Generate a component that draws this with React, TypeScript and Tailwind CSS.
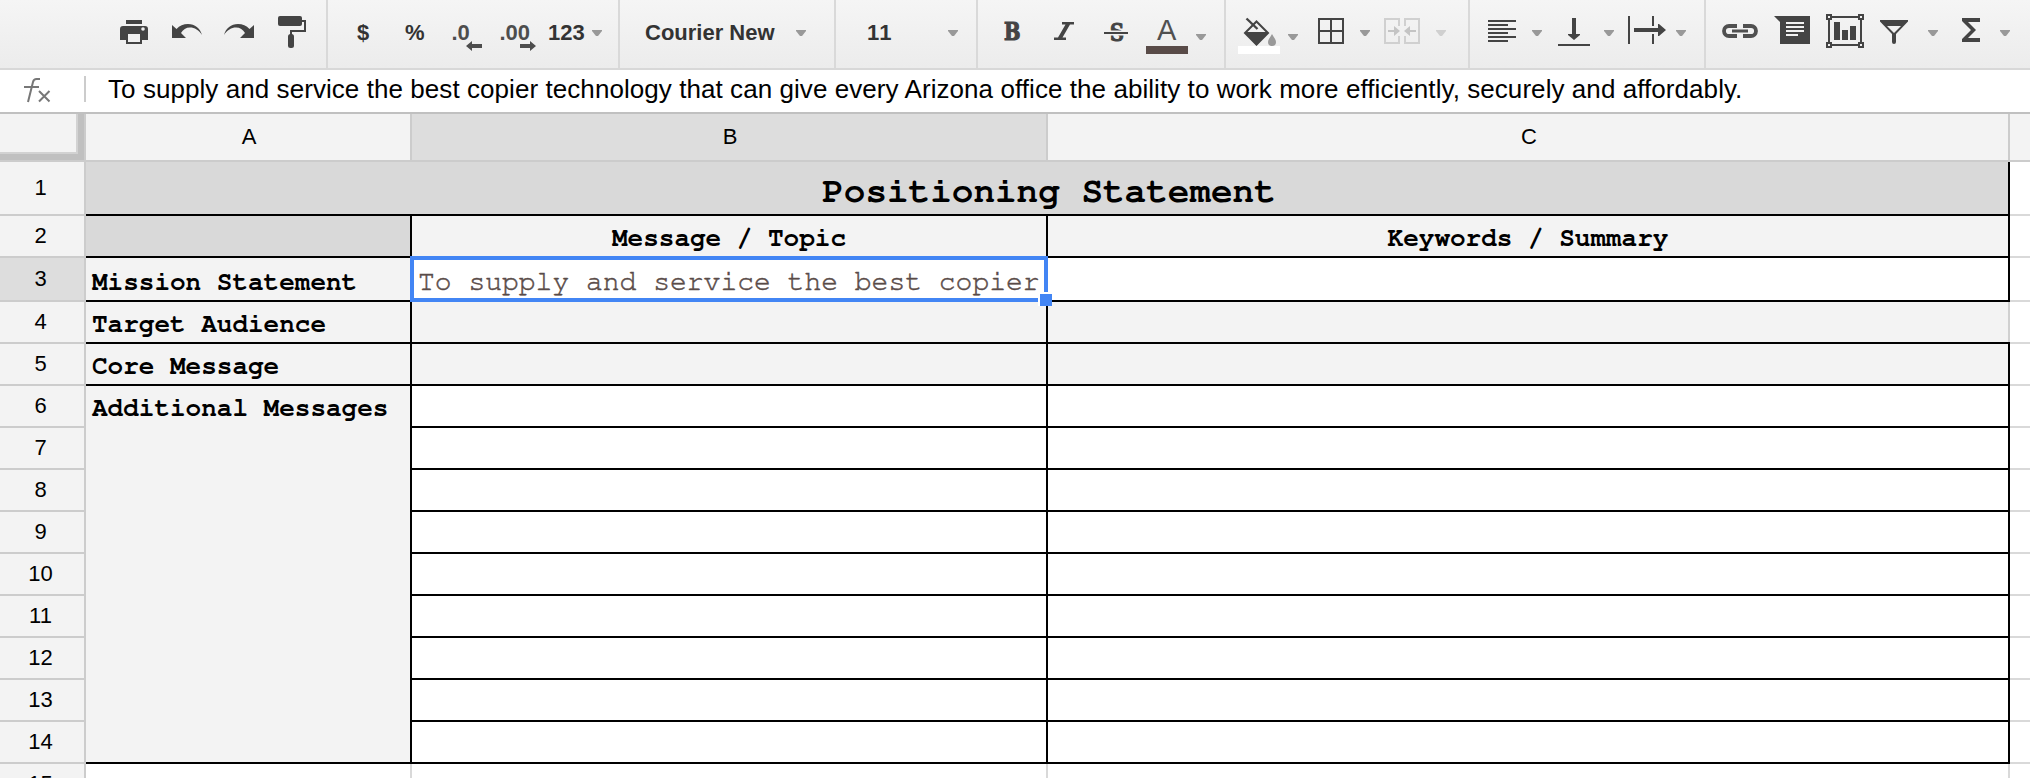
import type { ReactNode } from "react";

type IconProps = { box: string; className: string; children: ReactNode; color?: string };

/* Toolbar glyphs share one 68px tall coordinate space, so each viewBox is a slice of it. */
function Icon({ box, className, children, color = "#444444" }: IconProps) {
  return (
    <svg viewBox={box} className={`h-[68px] shrink-0 ${className}`} fill={color} stroke="none">
      {children}
    </svg>
  );
}

function Caret({ className, color = "#999999" }: { className: string; color?: string }) {
  return (
    <svg viewBox="0 0 10 6" className={`h-1.5 w-2.5 shrink-0 ${className}`} fill={color}>
      <path d="M0 0h10v1L6 6H4L0 1z" />
    </svg>
  );
}

function Group({ className, children }: { className: string; children: ReactNode }) {
  return <div className={`flex h-[68px] shrink-0 border-[#d9d9d9] ${className}`}>{children}</div>;
}

const label = "mt-[19px] shrink-0 whitespace-nowrap text-[22px] leading-7 font-bold text-[#333333]";

function Toolbar() {
  return (
    <div className="flex h-[70px] shrink-0 overflow-hidden border-b-2 border-[#d8d8d8] bg-linear-to-b from-[#f5f5f5] to-[#ececec]">
      <Group className="w-[328px] border-r-2">
        <Icon box="120 0 28 68" className="ml-[120px] w-7">
          <path d="M126 20h16v4h-16z" />
          <path d="M123 26h22a3 3 0 0 1 3 3v11h-6v4h-16v-4h-6V29a3 3 0 0 1 3-3z" />
          <path d="M128 34h12v8h-12z" fill="#f1f1f1" />
          <circle cx="143" cy="29" r="1.8" fill="#f1f1f1" />
        </Icon>
        <Icon box="172 0 30 68" className="ml-6 w-[30px]">
          <path d="M172 25l4.500 4c3-3.200 7-5 11.500-5 7 0 12 4 14 11-3-5-7.500-7.500-12-7.500-4 0-7 2-9 5.500l5 5H172z" />
        </Icon>
        <Icon box="224 0 30 68" className="ml-[22px] w-[30px]">
          <path d="M254 25l-4.500 4c-3-3.200-7-5-11.500-5-7 0-12 4-14 11 3-5 7.500-7.500 12-7.500 4 0 7 2 9 5.500l-5 5H254z" />
        </Icon>
        <Icon box="278 0 28 68" className="ml-6 w-7">
          <rect x="278" y="16" width="24" height="10" rx="2" />
          <path d="M302 21h3v10h-14v4" fill="none" stroke="#444444" strokeWidth="2" />
          <rect x="288" y="34" width="6" height="14" rx="2.500" />
        </Icon>
      </Group>

      <Group className="w-[292px] border-r-2">
        <span className={`ml-[29px] w-12 ${label}`}>$</span>
        <span className={`w-[46px] ${label}`}>%</span>
        <Icon box="451 0 33 68" className="w-[33px]" color="#4d4d4d">
          <text x="451.500" y="40" fontSize="22" fontWeight="700">.0</text>
          <path d="M466 46l6-5v3h10v4h-10v3z" />
        </Icon>
        <Icon box="499 0 39 68" className="ml-[15px] w-[39px]" color="#4d4d4d">
          <text x="499.500" y="40" fontSize="22" fontWeight="700">.00</text>
          <path d="M536 46l-6-5v3h-10v4h10v3z" />
        </Icon>
        <span className={`ml-[10px] w-11 ${label}`}>123</span>
        <Caret className="mt-[30px]" />
      </Group>

      <Group className="w-[216px] border-r-2">
        <span className={`ml-[25px] w-[151px] ${label}`}>Courier New</span>
        <Caret className="mt-[30px]" />
      </Group>

      <Group className="w-[142px] border-r-2">
        <span className={`ml-[31px] w-[81px] [font-kerning:none] ${label}`}>11</span>
        <Caret className="mt-[30px]" />
      </Group>

      <Group className="w-[248px] border-r-2">
        <Icon box="1002 0 22 68" className="ml-6 w-[22px]">
          <text x="1004" y="39.500" fontSize="24" fontWeight="700" className="font-['DejaVu_Serif',serif]" stroke="#444444" strokeWidth="1.200" textLength="16.500" lengthAdjust="spacingAndGlyphs">B</text>
        </Icon>
        <Icon box="1052 0 26 68" className="ml-7 w-[26px]">
          <path d="M1062 22h12v2.500h-4l-7.500 13h3.500v2.500h-12v-2.500h4l7.500-13h-3.500z" />
        </Icon>
        <Icon box="1104 0 24 68" className="ml-[26px] w-6">
          <text x="1110" y="41" fontSize="24.500" fontWeight="700" className="font-['DejaVu_Serif',serif]" stroke="#444444" strokeWidth="1.200" textLength="14" lengthAdjust="spacingAndGlyphs">S</text>
          <path d="M1104 30.500h24v1.500h-24zM1104 34h24v1.500h-24z" fill="#f1f1f1" />
          <path d="M1104 32h24v2h-24z" />
        </Icon>
        <Icon box="1146 0 42 68" className="ml-[18px] w-[42px]">
          <text x="1157" y="40" fontSize="29" fill="#505050">A</text>
          <path d="M1146 46h42v8h-42z" fill="#594b48" />
        </Icon>
        <Caret className="mt-[34px] ml-2" />
      </Group>

      <Group className="w-[244px] border-r-2">
        <Icon box="1238 0 42 68" className="ml-3 w-[42px]">
          <path d="M1238 46h42v8h-42z" fill="#ffffff" />
          <path d="M1256.500 21.500L1268 33l-11.500 11.500L1245 33z" fill="none" stroke="#444444" strokeWidth="2" />
          <path d="M1244.500 32h24l-12 13.500z" />
          <path d="M1246.500 18.500l11 10.500" fill="none" stroke="#444444" strokeWidth="2.400" />
          <path d="M1272 34c2 3.500 4 5.500 4 8a4 4 0 0 1-8 0c0-2.500 2-4.500 4-8z" fill="#999999" />
        </Icon>
        <Caret className="mt-[34px] ml-2" />
        <Icon box="1318 0 26 68" className="ml-5 w-[26px]">
          <path d="M1319 19h24v24h-24zM1331 19v24M1319 31h24" fill="none" stroke="#444444" strokeWidth="2" />
        </Icon>
        <Caret className="mt-[30px] ml-4" />
        <Icon box="1384 0 36 68" className="ml-3.5 w-9" color="#c4c4c4">
          <path d="M1399 26v-7h-14v24h14v-7M1405 26v-7h14v24h-14v-7" fill="none" stroke="#d0d0d0" strokeWidth="2" />
          <path d="M1388 30h6v-4l6 5-6 5v-4h-6zM1416 30h-6v-4l-6 5 6 5v-4h6z" />
        </Icon>
        <Caret className="mt-[30px] ml-4" color="#d0d0d0" />
      </Group>

      <Group className="w-[236px] border-r-2">
        <Icon box="1488 0 28 68" className="ml-[18px] w-7">
          <path d="M1488 20h28v2h-28zM1488 24h20v2h-20zM1488 28h28v2h-28zM1488 32h20v2h-20zM1488 36h28v2h-28zM1488 40h20v2h-20z" />
        </Icon>
        <Caret className="mt-[30px] ml-4" />
        <Icon box="1558 0 32 68" className="ml-4 w-8">
          <path d="M1558 44h32v2h-32zM1572 18h4v16h4v1l-6 5-6-5v-1h4z" />
        </Icon>
        <Caret className="mt-[30px] ml-3.5" />
        <Icon box="1628 0 38 68" className="ml-3.5 w-[38px]">
          <path d="M1628 16h2v28h-2zM1652 16h2v10h-2zM1652 34h2v10h-2zM1634 28h24v-4h1l7 6-7 6h-1v-4h-24z" />
        </Icon>
        <Caret className="mt-[30px] ml-2.5" />
      </Group>

      <Group className="w-[324px]">
        <Icon box="1722 0 36 68" className="ml-4 w-9">
          <path d="M1737 26h-8a5 5 0 0 0 0 10h8M1743 26h8a5 5 0 0 1 0 10h-8" fill="none" stroke="#505050" strokeWidth="3.800" />
          <path d="M1732 29.500h16v3h-16z" fill="#505050" />
        </Icon>
        <Icon box="1774 0 36 68" className="ml-4 w-9">
          <path d="M1774 16h36v28h-30V22z" />
          <path d="M1786 22h18v2h-18zM1786 26h18v2h-18zM1786 30h18v2h-18zM1786 34h12v2h-12z" fill="#f1f1f1" />
        </Icon>
        <Icon box="1826 0 38 68" className="ml-4 w-[38px]">
          <path d="M1829 17h32v28h-32z" fill="none" stroke="#444444" strokeWidth="2" />
          <path d="M1826 14h6v6h-6zM1858 14h6v6h-6zM1826 42h6v6h-6zM1858 42h6v6h-6z" />
          <path d="M1828 16h2v2h-2zM1860 16h2v2h-2zM1828 44h2v2h-2zM1860 44h2v2h-2z" fill="#f1f1f1" />
          <path d="M1834 22h6v18h-6zM1842 30h6v10h-6zM1850 26h6v14h-6z" />
        </Icon>
        <Icon box="1880 0 28 68" className="ml-4 w-7">
          <path fillRule="evenodd" d="M1880 20h28v1.500l-12 12.500v8a2 2 0 0 1-4 0v-8l-12-12.500zM1887 26l7 7 7-7z" />
        </Icon>
        <Caret className="mt-[30px] ml-5" />
        <Icon box="1962 0 18 68" className="ml-6 w-[18px]">
          <path d="M1962 18h18v4h-12l8 8-8 8h12v4h-18v-3l9-9-9-9z" />
        </Icon>
        <Caret className="mt-[30px] ml-5" />
      </Group>
    </div>
  );
}

function FormulaBar() {
  return (
    <div className="flex h-11 shrink-0 border-b-2 border-[#c0c0c0] bg-white">
      <svg viewBox="24 70 28 42" className="ml-6 h-[42px] w-7 shrink-0" fill="none" stroke="#777777" strokeWidth="2">
        <path d="M40 79h-3.500c-2 0-3 1-3.500 3l-5 20M24 87h15M39 91l10.500 10.500M49.500 91L39 101.500" />
      </svg>
      <div className="mt-1.5 ml-8 h-[26px] w-0.5 shrink-0 bg-[#cccccc]" />
      <div className="mt-1 ml-[22px] text-[26px] leading-[30px] tracking-[0.065px] whitespace-nowrap text-black">
        To supply and service the best copier technology that can give every Arizona office the ability to work more efficiently, securely and affordably.
      </div>
    </div>
  );
}

const cell = "flex items-end overflow-hidden border-r-2 border-b-2 border-black";
const mono = "font-[FreeMono,'Liberation_Mono',monospace] whitespace-pre";
const head = "flex items-center justify-center border-r-2 border-b-2 border-[#cccccc] text-[22px] leading-none text-black";

function RowHead({ n, active }: { n: number; active?: boolean }) {
  return (
    <div className={`col-start-1 pr-[3px] ${head} ${active ? "bg-[#dddddd]" : "bg-[#f3f3f3]"}`}>{n}</div>
  );
}

function Edge() {
  return <div className="col-start-5 border-b-2 border-[#d9d9d9]" />;
}

function RowTitle({ children }: { children: ReactNode }) {
  return (
    <div className={`${cell} ${mono} bg-[#f3f3f3] pb-[5px] pl-1.5 text-[26px] leading-[26px] font-bold text-black`}>{children}</div>
  );
}

const blankRows = [7, 8, 9, 10, 11, 12, 13, 14];

function Sheet() {
  return (
    <div className="grid grid-cols-[86px_326px_636px_962px_20px] grid-rows-[48px_54px_42px_44px] auto-rows-[42px] bg-white">
      <div className="border-r-2 border-b-2 border-[#cccccc] bg-[#c0c0c0]">
        <div className="h-10 w-[78px] border-r-2 border-b-2 border-[#d2d2d2] bg-[#f3f3f3]" />
      </div>
      <div className={`${head} bg-[#f3f3f3] pl-0.5`}>A</div>
      <div className={`${head} bg-[#dddddd] pl-0.5`}>B</div>
      <div className={`${head} bg-[#f3f3f3] pl-0.5`}>C</div>
      <div className="border-b-2 border-[#cccccc] bg-[#f3f3f3]" />

      <RowHead n={1} />
      <div className={`${cell} ${mono} col-span-3 justify-center bg-[#d9d9d9] pb-[5px] pl-1 text-[36px] leading-9 font-bold text-black`}>
        Positioning Statement
      </div>
      <Edge />

      <RowHead n={2} />
      <div className={`${cell} bg-[#d9d9d9]`} />
      <div className={`${cell} ${mono} justify-center bg-[#f3f3f3] pb-[5px] text-[26px] leading-[26px] font-bold text-black`}>Message / Topic</div>
      <div className={`${cell} ${mono} justify-center bg-[#f3f3f3] pb-[5px] text-[26px] leading-[26px] font-bold text-black`}>Keywords / Summary</div>
      <Edge />

      <RowHead n={3} active />
      <RowTitle>Mission Statement</RowTitle>
      <div className="relative">
        <div className={`${cell} ${mono} h-full bg-white pb-1 pl-1.5 text-[28px] leading-7 text-[#594b48] [-webkit-text-stroke:0.5px_#594b48]`}>
          To supply and service the best copier
        </div>
        <div className="absolute -top-0.5 right-0 bottom-0 -left-0.5 border-4 border-[#4285f4]" />
        <div className="absolute -right-1 -bottom-1 box-content size-3 border-t-2 border-l-2 border-white bg-[#4285f4]" />
      </div>
      <div className={cell} />
      <Edge />

      <RowHead n={4} />
      <RowTitle>Target Audience</RowTitle>
      <div className={`${cell} bg-[#f3f3f3]`} />
      <div className="flex flex-col bg-[#f3f3f3]">
        <div className="flex-1 border-r-2 border-[#d0d0d0]" />
        <div className="h-0.5 bg-black" />
      </div>
      <Edge />

      <RowHead n={5} />
      <RowTitle>Core Message</RowTitle>
      <div className={`${cell} bg-[#f3f3f3]`} />
      <div className={`${cell} bg-[#f3f3f3]`} />
      <Edge />

      <RowHead n={6} />
      <div className={`row-span-9 flex items-start border-r-2 border-b-2 border-black bg-[#f3f3f3] pt-[9px] pl-1.5 text-[26px] leading-[26px] font-bold text-black ${mono}`}>
        Additional Messages
      </div>
      <div className={cell} />
      <div className={cell} />
      <Edge />

      {blankRows.map((n) => (
        <div key={n} className="contents">
          <RowHead n={n} />
          <div className={`${cell} col-start-3`} />
          <div className={`${cell} col-start-4`} />
          <Edge />
        </div>
      ))}

      <RowHead n={15} />
      <div className="border-r-2 border-[#d9d9d9]" />
      <div className="border-r-2 border-[#d9d9d9]" />
      <div className="border-r-2 border-[#d9d9d9]" />
    </div>
  );
}

export default function App() {
  return (
    <div className="flex h-[778px] w-[2030px] flex-col overflow-hidden bg-white font-['Liberation_Sans',Arial,sans-serif]">
      <Toolbar />
      <FormulaBar />
      <Sheet />
    </div>
  );
}
